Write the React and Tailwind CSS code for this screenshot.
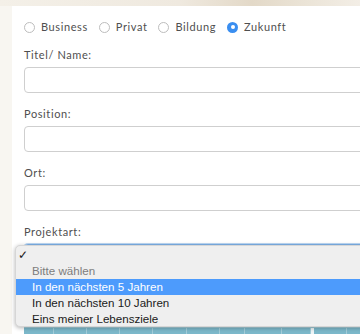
import React from "react";

const formFont = { fontFamily: "Lato, 'Noto Sans', sans-serif" };

function Radio({ label, checked }) {
  return (
    <label className="flex items-center gap-[6px]">
      {checked ? (
        <span className="w-[11px] h-[11px] rounded-full bg-[#3a8ef0] flex items-center justify-center">
          <span className="w-[4px] h-[4px] rounded-full bg-white" />
        </span>
      ) : (
        <span className="w-[11px] h-[11px] rounded-full border border-[#bdbdbd] bg-white" />
      )}
      <span>{label}</span>
    </label>
  );
}

function Field({ label }) {
  return (
    <div className="flex flex-col">
      <div className="h-[14px] leading-[14px] mb-[5px]">{label}</div>
      <div className="h-[26px] border border-[#cfcfcf] rounded-[4px] bg-white mb-[14px]" />
    </div>
  );
}

export default function App() {
  const tools = [
    { t: "H1", w: 30 },
    { t: "H2", w: 33 },
    { t: "H3", w: 33 },
    { t: "H4", w: 33 },
    { t: "H5", w: 34 },
    { t: "H6", w: 33 },
    { t: "P", w: 25 },
    { t: "", w: 37 },
    { t: "❞", w: 29 },
  ];
  return (
    <div className="relative w-[360px] h-[334px] overflow-hidden bg-[#f8f6f1]">
      <div className="h-[6px] bg-[linear-gradient(90deg,#f4f0e8_0%,#efe9df_50%,#e3d9c8_70%,#ebe4d7_85%,#f3eee6_100%)]" />
      <div
        className="ml-[12px] w-[400px] bg-white pl-[12px] pt-[14px] text-[11px] text-[#4f4f4f] tracking-[0.6px]"
        style={formFont}
      >
        <div className="flex items-center h-[14px] gap-[11px] mb-[14px]">
          <Radio label="Business" />
          <Radio label="Privat" />
          <Radio label="Bildung" />
          <Radio label="Zukunft" checked />
        </div>
        <Field label="Titel/ Name:" />
        <Field label="Position:" />
        <Field label="Ort:" />
        <div className="flex flex-col">
          <div className="h-[14px] leading-[14px] mb-[5px]">Projektart:</div>
          <div className="h-[26px] border border-[#7fb3ea] rounded-[4px] bg-white shadow-[0_0_0_1px_#bcd8f5]" />
        </div>
        <div className="h-[57px]" />
        <div className="flex h-[30px] bg-[#7cb8ca] border-t border-[#a6d0dc] text-white text-[13px] font-bold" style={{ fontFamily: "'Liberation Sans', sans-serif" }}>
          {tools.map((x, i) => (
            <div
              key={i}
              className="border-r border-[#a3cdd9] flex justify-center pt-[4px]"
              style={{ width: x.w }}
            >
              {x.t}
            </div>
          ))}
          <div className="w-[3px] bg-[#eef5f7]" />
          <div className="w-[33px] border-r border-[#a3cdd9] flex justify-center pt-[4px]">B</div>
          <div className="w-[33px] flex justify-center pt-[4px] italic">I</div>
        </div>
      </div>

      <div
        className="absolute left-[15px] top-[245px] w-[380px] h-[82px] rounded-[5px] bg-[#efefef] shadow-[0_1px_4px_rgba(0,0,0,0.3)] border border-[#d6d6d6] pt-[1px] text-[11.6px] text-[#1a1a1a]"
        style={{ fontFamily: "'Liberation Sans', Arial, sans-serif" }}
      >
        <div className="h-[16px] leading-[16px] pl-[2px]">✓</div>
        <div className="h-[16px] leading-[16px] pl-[16px] text-[#7d7d7d]">Bitte wählen</div>
        <div className="h-[16px] leading-[16px] pl-[16px] bg-[#4d9bfc] text-white">In den nächsten 5 Jahren</div>
        <div className="h-[16px] leading-[16px] pl-[16px]">In den nächsten 10 Jahren</div>
        <div className="h-[16px] leading-[16px] pl-[16px]">Eins meiner Lebensziele</div>
      </div>
    </div>
  );
}
